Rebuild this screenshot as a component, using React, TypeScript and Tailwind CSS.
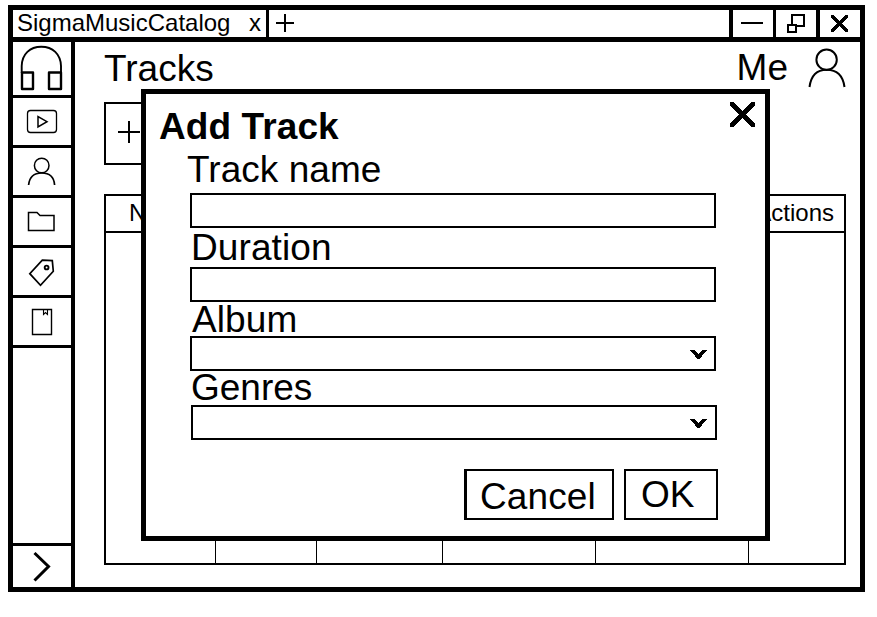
import type { ReactNode } from "react";

function Plus({ size }: { size: number }) {
  const c = size / 2;
  return (
    <svg width={size} height={size} fill="none" stroke="black" strokeWidth="2" shapeRendering="crispEdges" className="shrink-0">
      <path d={`M0 ${c}H${size}M${c} 0V${size}`} />
    </svg>
  );
}

function Headphones() {
  return (
    <svg width="58" height="53" fill="none" stroke="black" strokeWidth="2.4">
      <path d="M8.7 31V24C9 12 17 4.7 28.3 4.7S47.7 12 48 24V31" strokeWidth="1.9" />
      <path d="M9 30.5H20V47H9ZM36 30.5H48V47H36Z" strokeLinejoin="round" />
    </svg>
  );
}

function NavIcon({ children }: { children: ReactNode }) {
  return (
    <svg width="58" height="47" fill="none" stroke="black" strokeWidth="1.5">
      {children}
    </svg>
  );
}

const navIcons: ReactNode[] = [
  <NavIcon>
    <rect x="14.5" y="12.5" width="29" height="22" rx="3" strokeWidth="1.3" />
    <path d="M25 18.5V29L34 23.7Z" />
  </NavIcon>,
  <NavIcon>
    <circle cx="28.7" cy="17.5" r="7.3" />
    <path d="M15.6 37C16.5 28 22 25 28.7 25S41 28 41.6 37" strokeWidth="1.7" />
  </NavIcon>,
  <NavIcon>
    <path d="M15.5 32.5V14.5H24L27 17.5H41V32.5Z" />
  </NavIcon>,
  <NavIcon>
    <path d="M29.3 12.2L39.3 12.6L40.3 23.2L27.5 37.3L16.8 25.7Z" strokeWidth="1.7" />
    <circle cx="33.6" cy="19.5" r="1.9" strokeWidth="1.9" />
  </NavIcon>,
  <NavIcon>
    <path d="M19.5 11.5H38.5V36.5H19.5Z" strokeWidth="1.4" />
    <path d="M30.5 11.5V16.5L32.5 14.5L34.5 16.5V11.5" strokeWidth="1.1" />
  </NavIcon>,
];

function Cross({ size, width }: { size: number; width: number }) {
  const a = 1.7;
  const b = size - 1.7;
  return (
    <svg width={size} height={size} fill="none" stroke="black" strokeWidth={width} shapeRendering="crispEdges">
      <path d={`M${a} ${a}L${b} ${b}M${b} ${a}L${a} ${b}`} strokeLinecap="round" />
    </svg>
  );
}

function TitleBar() {
  return (
    <header className="flex h-8 shrink-0 border-b-5 border-black text-2xl leading-[25px]">
      <div className="flex w-[256px] justify-between border-r-3 border-black pr-[5px] pl-[4px]">
        <span>SigmaMusicCatalog</span>
        <span>x</span>
      </div>
      <div className="flex flex-1 items-start pt-1 pl-[7px]">
        <Plus size={18} />
      </div>
      <div className="flex w-[44px] border-l-4 border-black pt-3 pl-2">
        <div className="h-[2px] w-[22px] bg-black" />
      </div>
      <div className="w-[43px] border-l-3 border-black">
        <svg width="40" height="27" fill="none" stroke="black" strokeWidth="2" shapeRendering="crispEdges">
          <path d="M16 5H28V16H16ZM12 15H20V22H12Z" />
          <path d="M13 16H19V21H13Z" fill="white" stroke="none" />
        </svg>
      </div>
      <div className="flex w-[44px] border-l-4 border-black pt-[5px] pl-[11px]">
        <Cross size={17} width={3.4} />
      </div>
    </header>
  );
}

function Sidebar() {
  return (
    <nav className="flex w-[62px] shrink-0 flex-col border-r-4 border-black">
      <div className="h-[56px] border-b-3 border-black">
        <Headphones />
      </div>
      {navIcons.map((icon, i) => (
        <div key={i} className="h-[50px] border-b-3 border-black">
          {icon}
        </div>
      ))}
      <div className="mt-auto h-[44px] border-t-3 border-black">
        <svg width="58" height="41" fill="none" stroke="black" strokeWidth="3">
          <path d="M21.5 7L35.5 20.5L21.5 34.5" />
        </svg>
      </div>
    </nav>
  );
}

function TracksTable() {
  return (
    <div className="mt-[29px] flex h-[371px] w-[742px] flex-col border-2 border-black text-2xl">
      <div className="flex h-[37px] shrink-0 items-center justify-between border-b-2 border-black pr-[10px] pb-[2px] pl-[23px]">
        <span>Name</span>
        <span>Actions</span>
      </div>
      <div className="grid flex-1 grid-cols-[110px_101px_126px_153px_153px_95px]">
        <div className="border-r border-black" />
        <div className="border-r border-black" />
        <div className="border-r border-black" />
        <div className="border-r border-black" />
        <div className="border-r border-black" />
        <div />
      </div>
    </div>
  );
}

function SelectBox({ className }: { className: string }) {
  return (
    <div className={"flex h-[35px] w-[526px] items-center justify-end border-2 border-black pt-px " + className}>
      <svg width="17" height="9" shapeRendering="crispEdges">
        <path d="M0 0H4L8.5 4L13 0H17L10 8.5H7Z" fill="black" />
      </svg>
    </div>
  );
}

function AddTrackDialog() {
  return (
    <div className="absolute top-[89px] left-[141px] flex h-[452px] w-[629px] flex-col border-5 border-black bg-white text-[37px] leading-[38px]">
      <div className="flex h-[58px] shrink-0 justify-between pt-[14px] pr-[10px] pl-[13px]">
        <h2 className="font-bold tracking-[0.1px]">Add Track</h2>
        <div className="-mt-[6px]">
          <Cross size={25} width={4.8} />
        </div>
      </div>
      <div className="flex flex-col pl-[44px]">
        <label className="-mt-px -ml-[3px] h-[41px] tracking-[0.05px]">Track name</label>
        <div className="mt-px h-[35px] w-[526px] border-2 border-black" />
        <label className="mt-px ml-px h-[38px] tracking-[0.1px]">Duration</label>
        <div className="h-[35px] w-[526px] border-2 border-black" />
        <label className="-mt-px ml-[2px] h-[35px] tracking-[0.1px]">Album</label>
        <SelectBox className="pr-[7px]" />
        <label className="-mt-[2px] ml-px h-[36px]">Genres</label>
        <SelectBox className="ml-px pr-2" />
      </div>
      <div className="mt-[29px] flex gap-[10px] pl-[318px]">
        <button className="h-[51px] w-[150px] border-2 border-l-3 border-black pt-1 pl-[13px] text-left tracking-[0.1px]">Cancel</button>
        <button className="h-[51px] w-[94px] border-2 border-black pl-[15px] text-left">OK</button>
      </div>
    </div>
  );
}

export default function App() {
  return (
    <div className="relative h-[617px] w-[877px] overflow-hidden bg-white pt-[5px] pl-2 font-['Liberation_Sans',Arial,sans-serif] text-black">
      <div className="flex h-[587px] w-[857px] flex-col border-5 border-black">
        <TitleBar />
        <div className="flex min-h-0 flex-1">
          <Sidebar />
          <main className="flex-1 pl-[29px]">
            <div className="flex h-[60px] justify-between pt-2 pr-[14px] text-[37px] leading-[38px]">
              <h1>Tracks</h1>
              <div className="flex gap-[20px]">
                <span className="-mt-px">Me</span>
                <svg width="38" height="40" fill="none" stroke="black" strokeWidth="2" className="-mt-[2px]">
                  <circle cx="18.6" cy="11.7" r="10.2" />
                  <path d="M1.5 39C3 28 8 21.8 18.6 21.8S35 28 36.5 39" />
                </svg>
              </div>
            </div>
            <div className="flex h-[63px] w-[160px] items-start border-2 border-black pt-[17px] pl-3">
              <Plus size={22} />
            </div>
            <TracksTable />
          </main>
        </div>
      </div>
      <AddTrackDialog />
    </div>
  );
}
